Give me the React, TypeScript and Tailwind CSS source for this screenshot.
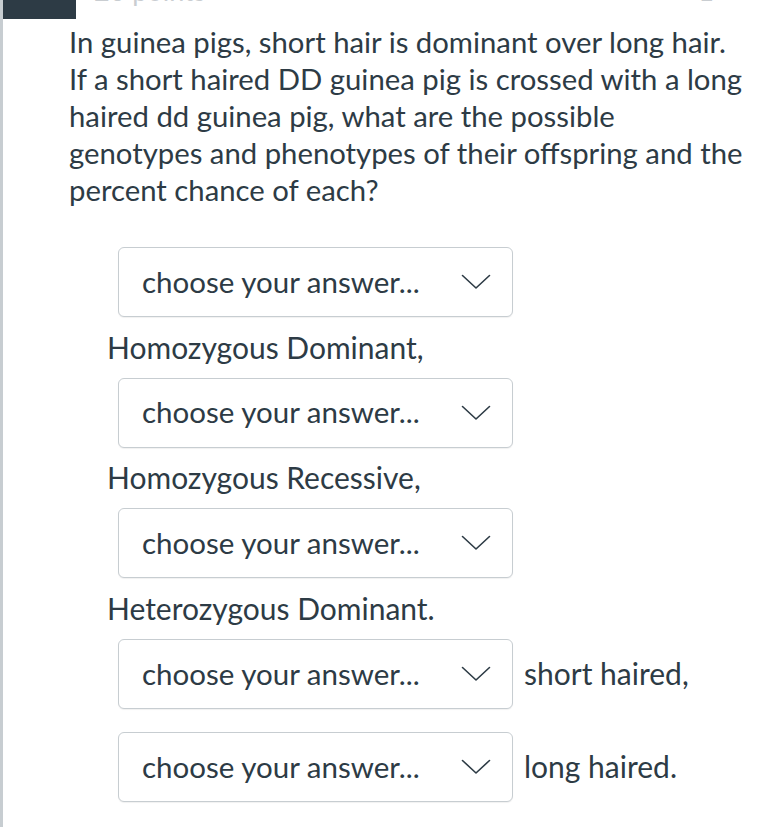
import React from 'react';

const ink = 'text-[#2d3b45]';

function Chevron() {
  return (
    <svg width="30" height="16" viewBox="0 0 30 16" fill="none" className="shrink-0">
      <path d="M1.5 1.5 L15 14 L28.5 1.5" stroke="#2d3b45" strokeWidth="1.6" strokeLinecap="round" strokeLinejoin="round" />
    </svg>
  );
}

function AnswerSelect() {
  return (
    <div className="flex h-[70px] w-[395px] items-center justify-between rounded-[6px] border border-[#c7cdd1] bg-white pl-[23px] pr-[21px] shadow-[0_1px_1px_rgba(0,0,0,0.06)]">
      <span className={`text-[29.5px] ${ink}`}>choose your answer...</span>
      <Chevron />
    </div>
  );
}

function Label({ children }: { children: React.ReactNode }) {
  return <p className={`ml-[104px] text-[30px] leading-[37px] ${ink}`}>{children}</p>;
}

export default function App() {
  return (
    <div
      className="min-h-[827px] w-full border-l-[3px] border-[#c7cdd1] bg-white"
      style={{ fontFamily: 'Lato, "Open Sans", sans-serif' }}
    >
      <div className="flex h-[19px] items-start overflow-hidden">
        <div className="h-[19px] w-[73px] bg-[#2d3b45]" />
        <span className="ml-[18px] -translate-y-[29px] text-[27px] text-[#c9cdd1]">20 points</span>
        <span className="ml-auto mr-[58px] -translate-y-[29px] text-[27px] text-[#c9cdd1]">1</span>
      </div>

      <p className={`ml-[66px] pt-[4px] text-[29.3px] leading-[37px] ${ink}`}>
        In guinea pigs, short hair is dominant over long hair.
        <br />
        If a short haired DD guinea pig is crossed with a long
        <br />
        haired dd guinea pig, what are the possible
        <br />
        genotypes and phenotypes of their offspring and the
        <br />
        percent chance of each?
      </p>

      <div className="mt-[39px] flex flex-col">
        <div className="ml-[115px]">
          <AnswerSelect />
        </div>
        <div className="py-[11.8px]">
          <Label>Homozygous Dominant,</Label>
        </div>
        <div className="ml-[115px]">
          <AnswerSelect />
        </div>
        <div className="py-[11.8px]">
          <Label>Homozygous Recessive,</Label>
        </div>
        <div className="ml-[115px]">
          <AnswerSelect />
        </div>
        <div className="py-[11.8px]">
          <Label>Heterozygous Dominant.</Label>
        </div>
        <div className="ml-[115px] flex items-center gap-[11px]">
          <AnswerSelect />
          <span className={`text-[30px] ${ink}`}>short haired,</span>
        </div>
        <div className="ml-[115px] mt-[23px] flex items-center gap-[11px]">
          <AnswerSelect />
          <span className={`text-[30px] ${ink}`}>long haired.</span>
        </div>
      </div>
    </div>
  );
}
